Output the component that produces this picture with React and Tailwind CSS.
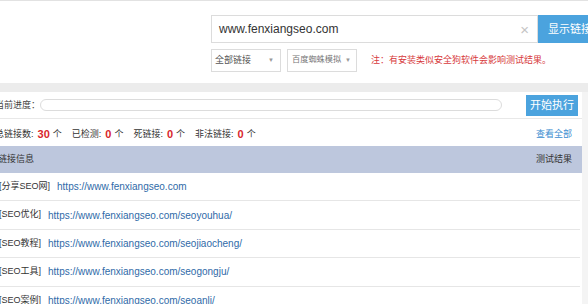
import React from "react";

const rows = [
  ["[分享SEO网]", "https://www.fenxiangseo.com"],
  ["[SEO优化]", "https://www.fenxiangseo.com/seoyouhua/"],
  ["[SEO教程]", "https://www.fenxiangseo.com/seojiaocheng/"],
  ["[SEO工具]", "https://www.fenxiangseo.com/seogongju/"],
  ["[SEO案例]", "https://www.fenxiangseo.com/seoanli/"],
];

function Num({ children }) {
  return <span className="text-[#d9262c] font-bold text-[11px] ml-[4px] mr-[3px]">{children}</span>;
}

export default function App() {
  return (
    <div
      className="w-[588px] h-[304px] overflow-hidden bg-white flex flex-col border-t border-[#e2e2e2]"
      style={{ fontFamily: '"Liberation Sans", "Noto Sans CJK SC", sans-serif' }}
    >
      {/* top */}
      <div className="h-[82px] shrink-0 pl-[211px] pt-[14px] flex flex-col">
        <div className="flex h-[28px]">
          <div className="w-[327px] h-full border border-[#dcdcdc] flex items-center justify-between pl-[7px] pr-[8px]">
            <span className="text-[12px] text-[#333]">www.fenxiangseo.com</span>
            <span className="text-[15px] text-[#c4c4c4] leading-none font-light">×</span>
          </div>
          <div className="flex-1 bg-[#4ba3de] text-white text-[11px] flex items-center pl-[10px] whitespace-nowrap overflow-hidden">
            显示链接
          </div>
        </div>
        <div className="flex items-center mt-[6px] h-[23px] whitespace-nowrap">
          <div className="w-[70px] h-full border border-[#dcdcdc] flex items-center justify-between pl-[3px] pr-[6px] text-[9px] text-[#555]">
            <span>全部链接</span>
            <span className="text-[6px] text-[#999]">▼</span>
          </div>
          <div className="w-[70px] h-full ml-[6px] border border-[#dcdcdc] flex items-center justify-between pl-[4px] pr-[5px] text-[8.2px] text-[#777]">
            <span>百度蜘蛛模拟</span>
            <span className="text-[6px] text-[#999]">▼</span>
          </div>
          <span className="ml-[14px] text-[9px] text-[#d7393c]">
            注：有安装类似安全狗软件会影响测试结果。
          </span>
        </div>
      </div>

      {/* gray band */}
      <div className="h-[9px] shrink-0 bg-[#ececec]" />

      {/* panel */}
      <div className="flex flex-1">
        <div className="w-[587px] -ml-[5px] flex flex-col bg-white">
          <div className="h-[27px] shrink-0 flex items-center border-b border-[#e8e8e8] pr-[4px] whitespace-nowrap">
            <span className="text-[9px] text-[#444] pt-[2px]">当前进度：</span>
            <div className="w-[462px] h-[12px] rounded-full border border-[#dcdcdc]" />
            <div className="ml-auto w-[52px] h-[21px] bg-[#4ba3de] text-white text-[11px] flex items-center justify-center">
              开始执行
            </div>
          </div>
          <div className="h-[27px] shrink-0 flex items-center pt-[4px] pr-[10px] text-[9px] text-[#333] whitespace-nowrap">
            <span>总链接数:</span><Num>30</Num><span>个</span>
            <span className="ml-[10px]">已检测:</span><Num>0</Num><span>个</span>
            <span className="ml-[10px]">死链接:</span><Num>0</Num><span>个</span>
            <span className="ml-[10px]">非法链接:</span><Num>0</Num><span>个</span>
            <span className="ml-auto text-[#3a8dd0]">查看全部</span>
          </div>
          <div className="h-[27px] shrink-0 flex items-center justify-between pr-[10px] pl-[3px] bg-[#bdc7dd] text-[9px] text-[#333]">
            <span>链接信息</span>
            <span>测试结果</span>
          </div>
          {rows.map(([label, url], i) => (
            <div
              key={i}
              className="h-[28.4px] shrink-0 flex items-center border-b border-[#e6e6e6] mr-[2px] whitespace-nowrap pl-[4px]"
            >
              <span className="text-[#333] text-[9px]">{label}</span>
              <span className="ml-[7px] text-[#2f6aa8] text-[10px]">{url}</span>
            </div>
          ))}
        </div>
        <div className="flex-1 bg-[#f4f4f4]" />
      </div>
    </div>
  );
}
